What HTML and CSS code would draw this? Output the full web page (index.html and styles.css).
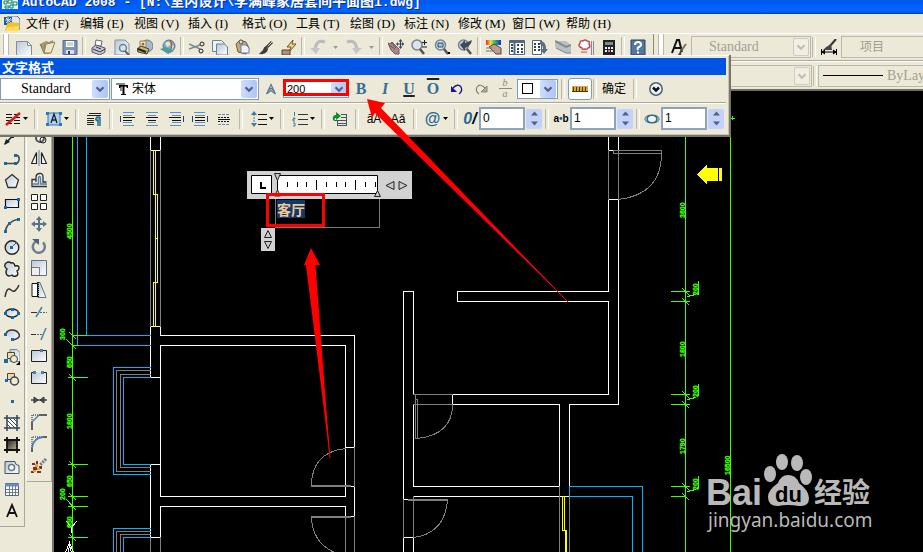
FILE: index.html
```html
<!DOCTYPE html>
<html lang="zh-CN">
<head>
<meta charset="utf-8">
<title>AutoCAD 2008</title>
<link rel="stylesheet" href="styles.css">
</head>
<body>
<svg class="sprite" aria-hidden="true">
  <defs>
    <linearGradient id="paper" x1="0" y1="0" x2="1" y2="1"><stop offset="0" stop-color="#b9c7d6"/><stop offset="1" stop-color="#fff"/></linearGradient>
    <linearGradient id="dusk" x1="0" y1="0" x2="1" y2="1"><stop offset="0" stop-color="#222"/><stop offset="1" stop-color="#b9b28c"/></linearGradient>
    <linearGradient id="tips" x1="0" y1="0" x2="1" y2="0"><stop offset="0" stop-color="#e22"/><stop offset=".3" stop-color="#ed3"/><stop offset=".6" stop-color="#2b6"/><stop offset="1" stop-color="#22d"/></linearGradient>
  </defs>
  <symbol id="app" viewBox="0 0 16 16"><path d="M4 0h9l3 3v10H4z" fill="#dfe8f2" stroke="#667"/><path d="M0 1h8v8H0z" fill="#1d5a8c"/><path d="M4 1v7M1 4h7M2 2l5 5M7 2L2 7" stroke="#cfe6f7"/><path d="M1 15L3 8l4-2 8 1v8z" fill="#f2c224"/><path d="M1 15l3-4 11-1v5z" fill="#ffdb57"/></symbol>
  <symbol id="new" viewBox="0 0 16 16"><path d="M.5 2.500h11l4 4v11H.5z" fill="url(#paper)" stroke="#7d8fa3"/><path d="M11.500 2.500v4h4z" fill="#fff" stroke="#7d8fa3"/></symbol>
  <symbol id="open" viewBox="0 0 16 16"><path d="M1 5l6-3 3 1 4-2v6l-4 8H5z" fill="#a3976b"/><path d="M5 14L7 5l9-2-4 11z" fill="#eee6c4" stroke="#8a7f57"/><path d="M1 5l4 9" stroke="#8a7f57"/></symbol>
  <symbol id="save" viewBox="0 0 16 16"><path d="M1 1.500h14v14H1z" fill="#7f93b2" stroke="#546a8c"/><path d="M4 2h8v6H4z" fill="#fff"/><path d="M5 4h6M5 6h6" stroke="#9aa9bd"/><path d="M4 11h8v4H4z" fill="#d8dfe9"/><path d="M6 12h2v3H6z" fill="#345"/></symbol>
  <symbol id="print" viewBox="0 0 16 16"><path d="M4 7l1-6 6 1-1 5z" fill="#fff" stroke="#667"/><path d="M1 9l4-3 9 3v4l-5 3-8-3z" fill="#c4c9d2" stroke="#556"/><path d="M2 10l7 3 5-3M5 8l5 2" stroke="#334" fill="none"/></symbol>
  <symbol id="preview" viewBox="0 0 16 16"><path d="M1 1h10l4 4v11H1z" fill="url(#paper)" stroke="#7c93a8"/><circle cx="9" cy="9" r="3.500" fill="#d6e2ec" stroke="#6d7f92" stroke-width="1.500"/><path d="M11 12l4 4" stroke="#6d5f4b" stroke-width="2"/></symbol>
  <symbol id="publish" viewBox="0 0 16 16"><circle cx="10" cy="7" r="6" fill="#aeb9c8" stroke="#66758a"/><path d="M3 2h6v6H3z" fill="#f7efbd" stroke="#886"/><circle cx="6" cy="5" r="1.500" fill="#a62"/><path d="M0 10l4-3 8 3-2 5-9-2z" fill="#c8b36a" stroke="#443"/><path d="M1 10l8 3" stroke="#222" stroke-width="2"/></symbol>
  <symbol id="globe" viewBox="0 0 16 16"><circle cx="9" cy="7" r="6" fill="#7fa9c8" stroke="#54748e"/><path d="M5 4q4-3 5 0t-3 4zM11 5l3 2-2 4z" fill="#e8e6bd"/><path d="M10 1q4 6-1 12" stroke="#b5472e" fill="none"/><path d="M0 10l6-2 8 4-6 3z" fill="#4c9da0"/></symbol>
  <symbol id="cut" viewBox="0 0 16 16"><path d="M0 5l11 5M0 10l11-4" stroke="#7b8794" stroke-width="1.500"/><circle cx="13" cy="5" r="2" fill="none" stroke="#222"/><circle cx="12" cy="12" r="2" fill="none" stroke="#222"/></symbol>
  <symbol id="copy" viewBox="0 0 16 16"><path d="M.5 1.500h9l3 3v8H.5z" fill="#edf2f7" stroke="#6c8096"/><path d="M4.500 5h8l3 3v8h-11z" fill="url(#paper)" stroke="#6c8096"/></symbol>
  <symbol id="paste" viewBox="0 0 16 16"><path d="M1 5l4-4 6 2 3 6-3 6-8-2z" fill="#c1aa75" stroke="#6c6044"/><path d="M6 6h5l3 3v5H6z" fill="#eef3f8" stroke="#6c8096"/><circle cx="6" cy="3" r="2" fill="#ddd" stroke="#555"/></symbol>
  <symbol id="brush" viewBox="0 0 16 16"><path d="M14 3L9 8" stroke="#444" stroke-width="3"/><path d="M14 3l-4 4" stroke="#e6cc93"/><path d="M9 7q-3 0-4 4l-4 4q8 1 9-5z" fill="#443b39"/></symbol>
  <symbol id="block" viewBox="0 0 16 16"><path d="M12 1L6 8h4l-2 5 7-8h-4z" fill="#f4d47c" stroke="#665630"/><path d="M1 11h8v5H1z" fill="#b58a78" stroke="#543"/></symbol>
  <symbol id="undo-grey" viewBox="0 0 16 16"><path d="M15 3Q6 0 5 11" fill="none" stroke="#b8bcc0" stroke-width="3"/><path d="M0 9h10l-4 6z" fill="#c4c7c9"/></symbol>
  <symbol id="redo-grey" viewBox="0 0 16 16"><path d="M1 3q9-3 10 8" fill="none" stroke="#b8bcc0" stroke-width="3"/><path d="M6 9h10l-6 6z" fill="#c4c7c9"/></symbol>
  <symbol id="pan" viewBox="0 0 16 16"><path d="M0 4l3 1 1-2 4 4 3 3v5H7L3 11z" fill="#ab8585" stroke="#725b60"/><path d="M3 3l5 6M1 6l6 4" stroke="#63575b"/><path d="M12.500 1v8M9 5h7" stroke="#345"/><path d="M12.500 0l2 2.500h-4zM12.500 10l2-2.500h-4zM8 5l2-2v4zM16 5l-2-2v4z" fill="#345"/></symbol>
  <symbol id="zoom" viewBox="0 0 16 16"><circle cx="6" cy="6" r="5" fill="#dbe4eb" stroke="#77838d" stroke-width="1.500"/><path d="M9 10l4 5" stroke="#555" stroke-width="2.500"/><path d="M13.500 1v5M11 3.500h5M11 8h5" stroke="#123" stroke-width="1"/></symbol>
  <symbol id="zoomwin" viewBox="0 0 16 16"><circle cx="6.500" cy="6" r="5" fill="#dbe4eb" stroke="#77838d" stroke-width="1.500"/><path d="M4 4h5v4H4z" fill="#9cc" stroke="#347"/><path d="M10 10l4 5" stroke="#555" stroke-width="2.500"/><path d="M14 13h2v2h-2z"/></symbol>
  <symbol id="zoomprev" viewBox="0 0 16 16"><circle cx="6.500" cy="6" r="5" fill="#c8d2da" stroke="#77838d" stroke-width="1.500"/><path d="M10 10l4 5" stroke="#555" stroke-width="2.500"/><path d="M3 6l5-5v3q5-2 7-3-1 6-7 8v3z" fill="#3d4b5c"/></symbol>
  <symbol id="props" viewBox="0 0 16 16"><path d="M0 1h15v5H0z" fill="url(#tips)"/><path d="M3 8l5-3 7 4v6h-5z" fill="#c29a88" stroke="#54484a"/><path d="M0 9h6M0 12h8" stroke="#777"/></symbol>
  <symbol id="dcenter" viewBox="0 0 16 16"><path d="M.5 1.500h15v14H.5z" fill="#fff" stroke="#526780"/><path d="M1 3h14M5.500 2v14" stroke="#526780" stroke-width="2"/><path d="M2 6h2M2 9h2M2 12h2M8 6h2M12 6h2M8 10h2M12 10h2M8 13h2M12 13h2" stroke="#345" stroke-width="2"/></symbol>
  <symbol id="palette" viewBox="0 0 16 16"><path d="M.5 1.500h9v14h-9z" fill="#fff" stroke="#526780"/><path d="M2 5h2M2 8h2M2 11h2M6 5h2M6 8h2M6 11h2" stroke="#345" stroke-width="2"/><path d="M8 2q6 0 6 8h2l-4 5-4-5h3q0-4-3-5z" fill="#5b6e84"/></symbol>
  <symbol id="sheet" viewBox="0 0 16 16"><path d="M0 2h11l5 4v8h-5L0 8z" fill="#b9c0c1"/><path d="M0 2l11 6 5-2" stroke="#818e91" stroke-width="2" fill="none"/><path d="M1 9l10 5h5" stroke="#75868b" fill="none"/></symbol>
  <symbol id="markup" viewBox="0 0 16 16"><path d="M2 4q0-3 3-2 2-2 4 0 3 0 2 3 2 3-1 4-1 2-3 1-3 1-3-1-3-1-3-3z" fill="#fff" stroke="#b84d59" stroke-width="1.500"/><path d="M3 13h6" stroke="#b84d59"/><path d="M13.500 2v14M15.500 2v14" stroke="#889"/></symbol>
  <symbol id="calc" viewBox="0 0 16 16"><path d="M2 1h12v15H2z" fill="#202325"/><path d="M4 3h8v3H4z" fill="#7b8b82"/><path d="M4 9h2M7 9h2M10 9h2M4 12h2M7 12h2M10 12h2" stroke="#eee" stroke-width="2"/><path d="M7 12h2" stroke="#e77" stroke-width="2"/></symbol>
  <symbol id="help" viewBox="0 0 16 16"><path d="M1 1h14v15H1z" fill="#54779d" stroke="#244366"/><path d="M5 6q0-3 3-3t3 3q0 1-2 2t-1 3M8 12.500v2" fill="none" stroke="#fff" stroke-width="2"/></symbol>
  <symbol id="textstyle" viewBox="0 0 16 16"><path d="M1 14L6 1h2l3 12M3 9h6" stroke="#111" stroke-width="2" fill="none"/><path d="M15 5l-5 7" stroke="#876d52" stroke-width="2"/><path d="M11 9l-4 7h3z" fill="#444"/></symbol>
  <symbol id="dimstyle" viewBox="0 0 16 16"><path d="M15 0L9 7" stroke="#333" stroke-width="2"/><path d="M10 5q-4 2-8 6h9z" fill="#444"/><path d="M.500 10v6M15.500 10v6M1 13h14" stroke="#000"/><path d="M0 13l4-2.500v5zM16 13l-4-2.500v5z"/></symbol>

  <symbol id="xline" viewBox="0 0 16 16"><path d="M1 15L15 0" stroke="#222" stroke-width="1.500"/><path d="M0 16l2-6 4 3zM7 6h3v3H7z" fill="#123"/></symbol>
  <symbol id="pline" viewBox="0 0 16 16"><path d="M2 12.500h9M11 4h1q4 1 3 5t-4 4" fill="none" stroke="#444" stroke-width="1.500"/><path d="M0 11h3v3H0zM10 11h3v3h-3zM10 3h3v3h-3z" fill="#19699e"/></symbol>
  <symbol id="polygon" viewBox="0 0 16 16"><path d="M8 1.500L14.500 7l-2.500 7.500H4L1.500 7z" fill="url(#paper)" stroke="#333" stroke-width="1.300"/></symbol>
  <symbol id="rect" viewBox="0 0 16 16"><path d="M1.500 4.500h13v8h-13z" fill="url(#paper)" stroke="#111" stroke-width="1.200"/><path d="M0 11h3v3H0zM13 3h3v3h-3z" fill="#19699e"/></symbol>
  <symbol id="arc" viewBox="0 0 16 16"><path d="M1 15Q3 4 15 2" fill="none" stroke="#444" stroke-width="1.500"/><path d="M0 13h3v3H0zM4 5h3v3H4zM13 1h3v3h-3z" fill="#19699e"/></symbol>
  <symbol id="circle" viewBox="0 0 16 16"><circle cx="8" cy="8.500" r="6.800" fill="url(#paper)" stroke="#222" stroke-width="1.400"/><path d="M8 8l5-5" stroke="#19699e"/><path d="M6 7h3v3H6z" fill="#19699e"/></symbol>
  <symbol id="cloud" viewBox="0 0 16 16"><path d="M3 8Q-1 5 2 2q3-2 5 0 3-1 4 3 4-1 4 2 0 2-2 3 2 4-1 5-3 1-4-1-3 2-5 0-2-3 0-6z" fill="url(#paper)" stroke="#222" stroke-width="1.400"/></symbol>
  <symbol id="spline" viewBox="0 0 16 16"><path d="M1 14Q3 3 7 7t8-5" fill="none" stroke="#333" stroke-width="1.500"/></symbol>
  <symbol id="ellipse" viewBox="0 0 16 16"><ellipse cx="8" cy="8" rx="6.500" ry="4" fill="url(#paper)" stroke="#222" stroke-width="1.300"/><path d="M0 7h3v3H0zM7 3h3v3H7zM13 7h3v3h-3zM7 11h3v3H7z" fill="#19699e"/></symbol>
  <symbol id="earc" viewBox="0 0 16 16"><path d="M2 7q1-4 6-4t7 4-6 6" fill="url(#paper)" stroke="#333" stroke-width="1.500"/><path d="M0 6h3v3H0zM7 11h3v3H7z" fill="#19699e"/></symbol>
  <symbol id="insert" viewBox="0 0 16 16"><path d="M6 .5h7l3 3v9H6z" fill="url(#paper)" stroke="#789"/><path d="M3.500 3.500h7v6h-7z" fill="#e5ddb0" stroke="#543"/><circle cx="10" cy="10" r="3.500" fill="#eeecc9" stroke="#345"/><path d="M0 10h4v4H0z" fill="#19699e"/><path d="M16 12v4h-4z"/></symbol>
  <symbol id="makeblock" viewBox="0 0 16 16"><path d="M3.500 2.500h7v6h-7z" fill="#e5ddb0" stroke="#543"/><circle cx="10.500" cy="10" r="4" fill="#eeecc9" stroke="#345" stroke-width="1.500"/><path d="M1 8h3v3H1z" fill="#19699e"/></symbol>
  <symbol id="point" viewBox="0 0 16 16"><path d="M7 7h3v3H7z" fill="#19699e"/></symbol>
  <symbol id="hatch" viewBox="0 0 16 16"><path d="M3 3h10v10H3z" fill="#fff"/><path d="M3 5l8 8M3 9l4 4M5 3l8 8M9 3l4 4" stroke="#345"/><path d="M3 0v16M13 0v16M0 3h16M0 13h16" stroke="#345" stroke-width="1.500"/></symbol>
  <symbol id="gradient" viewBox="0 0 16 16"><path d="M3 3h10v10H3z" fill="url(#dusk)"/><path d="M3 0v16M13 0v16M0 3h16M0 13h16" stroke="#111" stroke-width="1.800"/></symbol>
  <symbol id="region" viewBox="0 0 16 16"><path d="M1 2.500h10q0 4 4 4v8H1z" fill="url(#paper)" stroke="#456"/><circle cx="7.500" cy="8.500" r="3" fill="#fff" stroke="#678" stroke-width="1.500"/></symbol>
  <symbol id="table" viewBox="0 0 16 16"><path d="M1.500 2.500h13v12h-13z" fill="#fff" stroke="#4d6794"/><path d="M1 4h14" stroke="#6b8bc0" stroke-width="3"/><path d="M2 8.500h12M2 11.500h12M5.500 5v9M8.500 5v9M11.500 5v9" stroke="#6c7b94"/></symbol>
  <symbol id="mtext" viewBox="0 0 16 16"><path d="M3 14L8 2l5 12M5 10h6" fill="none" stroke="#111" stroke-width="1.800"/></symbol>

  <symbol id="copyobj" viewBox="0 0 16 16"><circle cx="9" cy="10" r="4" fill="#eee" stroke="#555" stroke-width="2"/><circle cx="12" cy="12" r="3" fill="none" stroke="#222"/></symbol>
  <symbol id="mirror" viewBox="0 0 16 16"><path d="M5.500 2.500v11H.5zM10.500 2.500v11h5z" fill="#fff" stroke="#222" stroke-width="1.200"/><path d="M8 0v16" stroke="#5a83a5"/></symbol>
  <symbol id="offset" viewBox="0 0 16 16"><path d="M5 10V5q0-3 3.500-3.500T12 5v5h3.500M5 7.500H1v7h15" fill="none" stroke="#333" stroke-width="1.300"/><path d="M1 12h6.500V6q0-1.500 1-1.500t1 1.500v6H16" fill="none" stroke="#4d83b6" stroke-width="1.300"/></symbol>
  <symbol id="array" viewBox="0 0 16 16"><path d="M.5.5h6v6h-6zM9.500.5h6v6h-6zM.5 9.500h6v6h-6zM9.500 9.500h6v6h-6z" fill="#fff" stroke="#222"/></symbol>
  <symbol id="move" viewBox="0 0 16 16"><path d="M8 2v12M2 8h12" stroke="#5c728a" stroke-width="2"/><path d="M8 0l3 4H5zM8 16l3-4H5zM0 8l4-3v6zM16 8l-4-3v6z" fill="#5c728a"/></symbol>
  <symbol id="rotate" viewBox="0 0 16 16"><path d="M5 3.500a6 6 0 1 0 7 1" fill="none" stroke="#6f7f90" stroke-width="2.500"/><path d="M1 1h7v6z" fill="#4d6074"/></symbol>
  <symbol id="scale" viewBox="0 0 16 16"><path d="M.5.5h15v15H.5z" fill="url(#paper)" stroke="#5c728a"/><path d="M.5 7.500h8v8h-8z" fill="#eee" stroke="#111" stroke-dasharray="1 1"/></symbol>
  <symbol id="stretch" viewBox="0 0 16 16"><path d="M7 .5l2 0 6 15H7z" fill="url(#paper)" stroke="#5c728a"/><path d="M1 1.500h5.500v13H1z" fill="#fff" stroke="#111"/><path d="M7 0v16" stroke="#111" stroke-dasharray="1 1" stroke-width="2"/></symbol>
  <symbol id="trim" viewBox="0 0 16 16"><path d="M0 8.500h6" stroke="#333"/><path d="M5 13l6-10" stroke="#4a80ac" stroke-width="1.500"/><path d="M9 8.500h7" stroke="#567" stroke-dasharray="2 1"/></symbol>
  <symbol id="extend" viewBox="0 0 16 16"><path d="M0 8.500h5" stroke="#333"/><path d="M6 8.500h5" stroke="#567" stroke-dasharray="2 1"/><path d="M10 14l5-12" stroke="#4a80ac" stroke-width="1.500"/></symbol>
  <symbol id="breakpt" viewBox="0 0 16 16"><path d="M.5 2.500h15v11H.5z" fill="url(#paper)" stroke="#222"/><path d="M9 1h3v3H9z" fill="#567b9b"/></symbol>
  <symbol id="break" viewBox="0 0 16 16"><path d="M5 2.500H.5v11h15v-11H13" fill="url(#paper)" stroke="#222"/><path d="M2 1h3v3H2zM10 1h3v3h-3z" fill="#567b9b"/></symbol>
  <symbol id="join" viewBox="0 0 16 16"><path d="M0 8h16" stroke="#444" stroke-width="1.500"/><path d="M3 5l4 3-4 3zM13 5L9 8l4 3z" fill="#456" stroke="#333"/></symbol>
  <symbol id="chamfer" viewBox="0 0 16 16"><path d="M1 16V8M8 1h8" stroke="#333" stroke-width="1.500"/><path d="M1 8V1h7" stroke="#111" fill="none" stroke-dasharray="1 1"/><path d="M1 8l7-7" stroke="#4a80ac" stroke-width="1.500"/></symbol>
  <symbol id="fillet" viewBox="0 0 16 16"><path d="M1 16v-4M12 1h4" stroke="#333" stroke-width="1.500"/><path d="M1 12V1h11" stroke="#111" fill="none" stroke-dasharray="1 1"/><path d="M1 12Q2 2 12 1" fill="none" stroke="#4a80ac" stroke-width="1.800"/></symbol>
  <symbol id="explode" viewBox="0 0 16 16"><path d="M15 1L9 7" stroke="#777" stroke-width="3" stroke-dasharray="2 1"/><path d="M1 5h3v2H1zM5 3h2v3H5zM8 8h3v3H8zM2 9h4v3H2zM0 13h3v2H0zM6 13h4v2H6z" fill="#8d2a20"/><path d="M4 6h3v3H4zM6 10h3v2H6zM2 12h3v2H2z" fill="#dba23e"/></symbol>

  <symbol id="tt" viewBox="0 0 16 16"><path d="M1 2h9v2H7v6H5V4H1z" fill="#888"/><path d="M4 5V4h9v3h-1l-1-1.500H9.500V13H11v1H6v-1h1.500V5.500H6L5 7H4z"/></symbol>
  <symbol id="annot" viewBox="0 0 16 16"><path d="M8 3.500L3.500 13 8 9.500l4.500 3.500zM5 10l3-3 3 3" fill="#e9f0f2" stroke="#587a93" stroke-width="1.200"/></symbol>
  <symbol id="undo" viewBox="0 0 16 16"><path d="M4 7q5-5 8-1 2 4-2 7" fill="none" stroke="#15188b" stroke-width="1.300"/><path d="M2 5v6h6z" fill="#15188b"/></symbol>
  <symbol id="redo" viewBox="0 0 16 16"><path d="M12 7Q7 2 4 6q-2 4 2 7" fill="none" stroke="#85857a" stroke-width="1.200"/><path d="M14 5v6H8z" fill="#aaa99b" stroke="#85857a"/></symbol>
  <symbol id="ruler" viewBox="0 0 16 16"><path d="M0 5h16v6H0z" fill="#d9ab36"/><path d="M0 10.500h16M1.500 6v4M4.500 6v4M7.500 6v4M10.500 6v4M13.500 6v4" stroke="#443409"/></symbol>
  <symbol id="options" viewBox="0 0 16 16"><circle cx="8" cy="8" r="6.200" fill="#edf1f4" stroke="#49627e" stroke-width="1.500"/><path d="M5 6.500l3 3 3-3" fill="none" stroke="#111" stroke-width="2.500"/></symbol>
  <symbol id="columns" viewBox="0 0 16 16"><path d="M1 3.500h6M9 3.500h6M1 6.500h6M9 6.500h6M1 9.500h6M9 9.500h6M1 12.500h6M9 12.500h6" stroke="#111"/><path d="M1 14L15 2" stroke="#d31921" stroke-width="2.500"/></symbol>
  <symbol id="justify" viewBox="0 0 16 16"><path d="M2 2h12v12H2z" fill="#b6cfe8" stroke="#297ab7"/><path d="M5 12L8 3l3 9M6 9h4" fill="none" stroke="#123" stroke-width="1.300"/><path d="M0 1h3v3H0zM13 1h3v3h-3zM0 12h3v3H0zM13 12h3v3h-3z" fill="#297ab7"/></symbol>
  <symbol id="para" viewBox="0 0 16 16"><path d="M3 2.500h12M1 4.500h14M1 7.500h7M1 9.500h7M1 11.500h7M1 13.500h7" stroke="#222"/><path d="M14 6h-3q-3 3 1 4v5M14 6v9" stroke="#2c6c96" stroke-width="1.500" fill="#62a0c2"/></symbol>
  <symbol id="al" viewBox="0 0 16 16"><path d="M3 1.500h11M3 4.500h9M3 11.500h9M3 14.500h11" stroke="#5e91bd"/><path d="M3 6.500h12M3 9.500h9" stroke="#111"/><path d="M.5 5v6" stroke="#246"/></symbol>
  <symbol id="ac" viewBox="0 0 16 16"><path d="M2 1.500h12M4 4.500h8M4 11.500h8M2 14.500h12" stroke="#5e91bd"/><path d="M2 6.500h12M4 9.500h8" stroke="#111"/></symbol>
  <symbol id="ar" viewBox="0 0 16 16"><path d="M2 1.500h11M4 4.500h9M4 11.500h9M2 14.500h11" stroke="#5e91bd"/><path d="M1 6.500h12M4 9.500h9" stroke="#111"/><path d="M15.500 5v6" stroke="#246"/></symbol>
  <symbol id="aj" viewBox="0 0 16 16"><path d="M2 1.500h11M3 4.500h10M3 11.500h10M2 14.500h11" stroke="#5e91bd"/><path d="M3 6.500h10M3 9.500h10" stroke="#111"/><path d="M.500 5v6M15.500 5v6" stroke="#246"/></symbol>
  <symbol id="ad" viewBox="0 0 16 16"><path d="M2 3.500h12M2 13.500h12" stroke="#5e91bd" stroke-dasharray="3 1"/><path d="M2 6.500h12M2 10.500h12" stroke="#111" stroke-dasharray="2 1"/><path d="M2 8.500h12" stroke="#111"/></symbol>
  <symbol id="spacing" viewBox="0 0 16 16"><path d="M7 3.500h9M7 8.500h9M7 13.500h9" stroke="#111"/><path d="M3 3v10" stroke="#397ba1" stroke-dasharray="2 1"/><path d="M3 0l3 4H0zM3 16l3-4H0z" fill="#397ba1"/></symbol>
  <symbol id="list" viewBox="0 0 16 16"><path d="M6 3.500h10M6 8.500h10M6 13.500h10" stroke="#333"/><path d="M2.500 1v4M1 7h2v1H1v2h2M1 12h2v3H1" stroke="#397ba1" fill="none"/></symbol>
  <symbol id="field" viewBox="0 0 16 16"><path d="M9 3.500h6M9 6.500h6M2 9.500h13M6 12.500h9M6 14.500h9M14.500 3v12M5.500 9v6" stroke="#456"/><path d="M1 9Q0 4 4 4V1l5 4-5 4V7Q2 7 3 10z" fill="#158a2f"/></symbol>
  <symbol id="width" viewBox="0 0 16 16"><ellipse cx="8" cy="8" rx="7.500" ry="4.500" fill="#356d88"/><ellipse cx="8" cy="8" rx="4" ry="3" fill="#f2f4f0"/><path d="M0 8l3-3v6zM16 8l-3-3v6z" fill="#79a9bb"/></symbol>
  <symbol id="down" viewBox="0 0 16 16"><path d="M4 6l4 4 4-4" fill="none" stroke="currentColor" stroke-width="2.500"/></symbol>
  <symbol id="tri" viewBox="0 0 7 7"><path d="M1 2h5L3.500 5z" fill="currentColor"/></symbol>
  <symbol id="up-tri" viewBox="0 0 7 7"><path d="M0 5.500h7L3.500 1.500z" fill="currentColor"/></symbol>
  <symbol id="down-tri" viewBox="0 0 7 7"><path d="M0 1.500h7L3.500 5.500z" fill="currentColor"/></symbol>
</svg>

<div class="app">
  <header class="titlebar">
    <svg class="title-icon" viewBox="0 0 16 12" aria-hidden="true"><path d="M0 0h16v11H0z" fill="#e4fff4"/><path d="M2 3h3v3H2zM6 2h4v3H6zM11 4h4v3h-4zM3 8h4v2H3zM8 7h3v3H8z" fill="none" stroke="#197864"/></svg>
    <h1>AutoCAD 2008 - [N:\<span>室内设计</span>\<span>李满峰家居套间平面图</span>1.dwg]</h1>
  </header>

  <nav class="menubar" aria-label="菜单">
    <svg class="icon"><use href="#app"/></svg>
    <div class="menus">
      <button>文件<span>(F)</span></button><button>编辑<span>(E)</span></button><button>视图<span>(V)</span></button><button>插入<span>(I)</span></button><button>格式<span>(O)</span></button><button>工具<span>(T)</span></button><button>绘图<span>(D)</span></button><button>标注<span>(N)</span></button><button>修改<span>(M)</span></button><button>窗口<span>(W)</span></button><button>帮助<span>(H)</span></button>
    </div>
  </nav>

  <div class="toolrow">
    <div class="toolbar standard">
      <i class="grip"></i>
      <button class="tool" aria-label="新建"><svg class="icon"><use href="#new"/></svg></button>
      <button class="tool" aria-label="打开"><svg class="icon"><use href="#open"/></svg></button>
      <button class="tool" aria-label="保存"><svg class="icon"><use href="#save"/></svg></button>
      <i class="sep"></i>
      <button class="tool" aria-label="打印"><svg class="icon"><use href="#print"/></svg></button>
      <button class="tool" aria-label="打印预览"><svg class="icon"><use href="#preview"/></svg></button>
      <button class="tool" aria-label="发布"><svg class="icon"><use href="#publish"/></svg></button>
      <button class="tool" aria-label="三维"><svg class="icon"><use href="#globe"/></svg></button>
      <i class="sep"></i>
      <button class="tool" aria-label="剪切"><svg class="icon"><use href="#cut"/></svg></button>
      <button class="tool" aria-label="复制"><svg class="icon"><use href="#copy"/></svg></button>
      <button class="tool" aria-label="粘贴"><svg class="icon"><use href="#paste"/></svg></button>
      <button class="tool" aria-label="特性匹配"><svg class="icon"><use href="#brush"/></svg></button>
      <button class="tool" aria-label="块编辑器"><svg class="icon"><use href="#block"/></svg></button>
      <i class="sep"></i>
      <button class="tool" aria-label="放弃"><svg class="icon"><use href="#undo-grey"/></svg></button>
      <button class="drop" aria-label="放弃列表"><svg class="tri"><use href="#tri"/></svg></button>
      <button class="tool" aria-label="重做"><svg class="icon"><use href="#redo-grey"/></svg></button>
      <button class="drop" aria-label="重做列表"><svg class="tri"><use href="#tri"/></svg></button>
      <i class="sep"></i>
      <button class="tool" aria-label="平移"><svg class="icon"><use href="#pan"/></svg></button>
      <button class="tool" aria-label="缩放"><svg class="icon"><use href="#zoom"/></svg></button>
      <button class="tool" aria-label="窗口缩放"><svg class="icon"><use href="#zoomwin"/></svg></button>
      <button class="tool" aria-label="缩放上一个"><svg class="icon"><use href="#zoomprev"/></svg></button>
      <i class="sep"></i>
      <button class="tool" aria-label="特性"><svg class="icon"><use href="#props"/></svg></button>
      <button class="tool" aria-label="设计中心"><svg class="icon"><use href="#dcenter"/></svg></button>
      <button class="tool" aria-label="工具选项板"><svg class="icon"><use href="#palette"/></svg></button>
      <button class="tool" aria-label="图纸集"><svg class="icon"><use href="#sheet"/></svg></button>
      <button class="tool" aria-label="标记集"><svg class="icon"><use href="#markup"/></svg></button>
      <button class="tool" aria-label="计算器"><svg class="icon"><use href="#calc"/></svg></button>
      <i class="sep"></i>
      <button class="tool" aria-label="帮助"><svg class="icon"><use href="#help"/></svg></button>
    </div>
    <div class="toolbar styles">
      <i class="grip"></i>
      <button class="tool" aria-label="文字样式"><svg class="icon"><use href="#textstyle"/></svg></button>
      <div class="combo off style-combo"><select aria-label="文字样式名" disabled><option>Standard</option></select><span class="arrow"><svg class="icon"><use href="#down"/></svg></span></div>
      <i class="sep"></i>
      <button class="tool" aria-label="标注样式"><svg class="icon"><use href="#dimstyle"/></svg></button>
      <div class="combo off grow dim-combo"><select aria-label="标注样式名" disabled><option>项目</option></select></div>
    </div>
  </div>

  <div class="toolrow second">
    <div class="combo off color-combo"><select aria-label="颜色" disabled><option></option></select><span class="arrow"><svg class="icon"><use href="#down"/></svg></span></div>
    <i class="sep"></i>
    <div class="combo off grow line-combo"><i class="linetype"></i><select aria-label="线型" disabled><option>ByLayer</option></select></div>
  </div>

  <main class="workspace">
    <div class="rails">
      <div class="rail draw">
        <button aria-label="构造线"><svg class="icon"><use href="#xline"/></svg></button>
        <button aria-label="多段线"><svg class="icon"><use href="#pline"/></svg></button>
        <button aria-label="正多边形"><svg class="icon"><use href="#polygon"/></svg></button>
        <button aria-label="矩形"><svg class="icon"><use href="#rect"/></svg></button>
        <button aria-label="圆弧"><svg class="icon"><use href="#arc"/></svg></button>
        <button aria-label="圆"><svg class="icon"><use href="#circle"/></svg></button>
        <button aria-label="修订云线"><svg class="icon"><use href="#cloud"/></svg></button>
        <button aria-label="样条曲线"><svg class="icon"><use href="#spline"/></svg></button>
        <button aria-label="椭圆"><svg class="icon"><use href="#ellipse"/></svg></button>
        <button aria-label="椭圆弧"><svg class="icon"><use href="#earc"/></svg></button>
        <button aria-label="插入块"><svg class="icon"><use href="#insert"/></svg></button>
        <button aria-label="创建块"><svg class="icon"><use href="#makeblock"/></svg></button>
        <button aria-label="点"><svg class="icon"><use href="#point"/></svg></button>
        <button aria-label="图案填充"><svg class="icon"><use href="#hatch"/></svg></button>
        <button aria-label="渐变色"><svg class="icon"><use href="#gradient"/></svg></button>
        <button aria-label="面域"><svg class="icon"><use href="#region"/></svg></button>
        <button aria-label="表格"><svg class="icon"><use href="#table"/></svg></button>
        <button aria-label="多行文字"><svg class="icon"><use href="#mtext"/></svg></button>
      </div>
      <div class="rail modify">
        <button aria-label="复制对象"><svg class="icon"><use href="#copyobj"/></svg></button>
        <button aria-label="镜像"><svg class="icon"><use href="#mirror"/></svg></button>
        <button aria-label="偏移"><svg class="icon"><use href="#offset"/></svg></button>
        <button aria-label="阵列"><svg class="icon"><use href="#array"/></svg></button>
        <button aria-label="移动"><svg class="icon"><use href="#move"/></svg></button>
        <button aria-label="旋转"><svg class="icon"><use href="#rotate"/></svg></button>
        <button aria-label="缩放对象"><svg class="icon"><use href="#scale"/></svg></button>
        <button aria-label="拉伸"><svg class="icon"><use href="#stretch"/></svg></button>
        <button aria-label="修剪"><svg class="icon"><use href="#trim"/></svg></button>
        <button aria-label="延伸"><svg class="icon"><use href="#extend"/></svg></button>
        <button aria-label="打断于点"><svg class="icon"><use href="#breakpt"/></svg></button>
        <button aria-label="打断"><svg class="icon"><use href="#break"/></svg></button>
        <button aria-label="合并"><svg class="icon"><use href="#join"/></svg></button>
        <button aria-label="倒角"><svg class="icon"><use href="#chamfer"/></svg></button>
        <button aria-label="圆角"><svg class="icon"><use href="#fillet"/></svg></button>
        <button aria-label="分解"><svg class="icon"><use href="#explode"/></svg></button>
      </div>
    </div>

    <div class="canvas">
      <svg class="plan" viewBox="54 91 869 461" preserveAspectRatio="xMinYMin meet" role="img" aria-label="平面图">
        <g transform="translate(.5 .5)" fill="none" stroke-linecap="square">
          <g stroke="#fff">
            <path d="M150 91V150H160V91M150 367V326H160V335H354V447H345M150 367V377H160M345 345H160V496H345zM150 536V464H160M345 516V506H160V537H150"/>
            <path d="M351 486H354V516H351M403 499V291H413V394M408 499H403M403 552V537H413V552M452 404V394H608V301H457V291H608V199H618V404H569V496H413M452 404H559V486H413V404M608 91V150H612M618 91V150M608 199H618"/>
          </g>
          <g stroke="#808080">
            <path d="M150 150V326M160 150V326M608 150V199M618 150V199M354 447V486M345 516V552M354 516V552M150 537V552M160 537V552M403 499V537M413 496V537M559 486V552M569 496V552"/>
            <path d="M413 394H452M413 404H452M415 394V438H417V399H415M417 438Q452 434 452 404M613 150H661V153H613zM661 153Q661 194 618 199M345 448Q311 452 311 485M311 485H350M311 486H350M311 516H350M311 517H350M311 517Q312 542 334 552M408 499H447M408 500H447M447 500Q444 533 413 537"/>
            <path d="M150 370H116V471H150M150 374H120V467H150M116 552V531H150M120 552V534H150"/>
          </g>
          <g stroke="#00b2ff">
            <path d="M77 91V345H150M86 91V335H150M150 367H113V474H150M150 377H123V464H150M113 552V528H150M123 552V537H150M569 496V486H642V552M569 496H632V552"/>
          </g>
          <path stroke="#ff0" d="M153 150H155V194H157V282H155V326H153V282H155V194H153zM155 238H157M562 496H564V530H566V552M562 496V530H565V552"/>
          <g stroke="#40ff00">
            <path d="M72 91V552M685 91V552M730 118V552M72 335H86M72 345H78M68 377H87M68 464H87M68 496H87M68 506H87M68 537H87M671 291H689M671 301H689M671 394H689M671 404H689M671 486H689M671 496H685"/>
            <path d="M69 332l6 6M69 342l6 6M69 374l6 6M69 461l6 6M69 493l6 6M69 503l6 6M69 534l6 6M682 288l6 6M682 298l6 6M682 391l6 6M682 401l6 6M682 483l6 6M682 493l6 6M66 339l6 6M66 499l6 6M687 296l8-2M687 399l8-2M687 491l8-2M731 118h3M732 116v3"/>
            <path d="M698 281V294M698 384V395M698 476V488"/>
          </g>
          <path stroke="#fff" d="M66 521l5 6l5-6M71 527V532M65 552l4-10l4 10M68 552l1-8l2 8"/>
        </g>
        <g class="dims">
          <text transform="translate(72 239) rotate(-90)">4500</text>
          <text transform="translate(65 340) rotate(-90)">300</text>
          <text transform="translate(72 368) rotate(-90)">650</text>
          <text transform="translate(72 429) rotate(-90)">1800</text>
          <text transform="translate(72 487) rotate(-90)">650</text>
          <text transform="translate(65 500) rotate(-90)">200</text>
          <text transform="translate(72 528) rotate(-90)">650</text>
          <text transform="translate(685 218) rotate(-90)">3600</text>
          <text transform="translate(698 295) rotate(-90)">200</text>
          <text transform="translate(685 357) rotate(-90)">1800</text>
          <text transform="translate(698 397) rotate(-90)">200</text>
          <text transform="translate(685 454) rotate(-90)">1790</text>
          <text transform="translate(698 490) rotate(-90)">200</text>
          <text transform="translate(730 475) rotate(-90)">16500</text>
        </g>
        <path fill="#ff0" d="M697 174.500l10-10V168h11v13h-11v3.500zM719 168h3v13h-3z"/>
      </svg>

      <div class="editor">
        <svg class="editor-ruler" viewBox="0 0 165 28" aria-hidden="true">
          <path d="M0 0h165v28H0z" fill="#d2d2d2"/>
          <path d="M4.500 4.500h20v18h-20zM30.500 4.500h100v18h-100z" fill="#fff" stroke="#000"/>
          <path d="M14 11v6h5" fill="none" stroke="#000" stroke-width="2"/>
          <path d="M40.500 11v5M50.500 11v5M59.500 11v5M69.500 9v10M79.500 11v5M89.500 11v5M98.500 11v5M108.500 9v10M118.500 11v5M128.500 11v5" stroke="#000"/>
          <path d="M27.500 2.500h6l-3 7zM27.500 25l3-6 3 6zM127.500 25.500h6l-3-6zM147 10.500v8l-8-4zM152 10.500v8l8-4z" fill="#c8c8c8" stroke="#222"/>
        </svg>
        <div class="textframe"><input type="text" value="客厅" aria-label="多行文字"></div>
        <svg class="stepper" viewBox="0 0 14 23" aria-hidden="true"><path d="M0 0h14v23H0z" fill="#d2d2d2"/><path d="M3.500 9.500h7l-3.500-7zM3.500 13.500h7l-3.500 7z" fill="#c8c8c8" stroke="#222"/></svg>
      </div>

      <svg class="watermark" viewBox="0 0 172 84" role="img" aria-label="Baidu 经验">
        <g fill="#b9b9b9">
          <ellipse cx="68" cy="20" rx="6" ry="8"/><ellipse cx="80" cy="8" rx="6" ry="8"/><ellipse cx="95" cy="9" rx="6" ry="8"/><ellipse cx="104" cy="23" rx="6" ry="8"/>
          <path d="M86 21q8 0 11 8 10 8 10 15 0 9-10 8-11-2-21 0-10 0-10-9 0-7 10-14 3-8 10-8z"/>
          <text class="wm-latin" x="4" y="51">Bai</text>
          <text class="wm-cjk" x="112" y="49">经验</text>
          <text class="wm-url" x="6" y="73">jingyan.baidu.com</text>
        </g>
        <text class="wm-du" x="73" y="48">du</text>
      </svg>
    </div>
  </main>

  <section class="dialog" aria-labelledby="fmt">
    <h2 id="fmt">文字格式</h2>
    <div class="fmtrow">
      <div class="combo w-style"><select aria-label="样式"><option>Standard</option></select><span class="arrow"><svg class="icon"><use href="#down"/></svg></span></div>
      <div class="combo w-font"><svg class="icon"><use href="#tt"/></svg><select aria-label="字体"><option>宋体</option></select><span class="arrow"><svg class="icon"><use href="#down"/></svg></span></div>
      <button class="fmt" aria-label="注释性"><svg class="icon"><use href="#annot"/></svg></button>
      <div class="combo w-size"><select aria-label="文字高度"><option>200</option></select><span class="arrow"><svg class="icon"><use href="#down"/></svg></span></div>
      <button class="fmt letter bold">B</button>
      <button class="fmt letter italic">I</button>
      <button class="fmt letter under">U</button>
      <button class="fmt letter over">O</button>
      <button class="fmt" aria-label="放弃"><svg class="icon"><use href="#undo"/></svg></button>
      <button class="fmt" aria-label="重做"><svg class="icon"><use href="#redo"/></svg></button>
      <button class="fmt fraction" aria-label="堆叠"><span>b</span><span>a</span></button>
      <div class="combo w-color"><i class="swatch"></i><select aria-label="文字颜色"><option></option></select><span class="arrow"><svg class="icon"><use href="#down"/></svg></span></div>
      <i class="sep"></i>
      <button class="fmt pressed" aria-label="标尺"><svg class="icon"><use href="#ruler"/></svg></button>
      <i class="sep narrow"></i>
      <button class="ok">确定</button>
      <i class="sep"></i>
      <button class="fmt options" aria-label="选项"><svg class="icon"><use href="#options"/></svg></button>
    </div>
    <div class="fmtrow lower">
      <button class="split" aria-label="分栏"><svg class="icon"><use href="#columns"/></svg><svg class="tri"><use href="#tri"/></svg></button>
      <i class="sep"></i>
      <button class="split" aria-label="对正"><svg class="icon"><use href="#justify"/></svg><svg class="tri"><use href="#tri"/></svg></button>
      <i class="sep"></i>
      <button class="fmt" aria-label="段落"><svg class="icon"><use href="#para"/></svg></button>
      <i class="sep"></i>
      <button class="fmt" aria-label="左对齐"><svg class="icon"><use href="#al"/></svg></button>
      <button class="fmt" aria-label="居中"><svg class="icon"><use href="#ac"/></svg></button>
      <button class="fmt" aria-label="右对齐"><svg class="icon"><use href="#ar"/></svg></button>
      <button class="fmt" aria-label="两端对齐"><svg class="icon"><use href="#aj"/></svg></button>
      <button class="fmt" aria-label="分布"><svg class="icon"><use href="#ad"/></svg></button>
      <i class="sep"></i>
      <button class="split" aria-label="行距"><svg class="icon"><use href="#spacing"/></svg><svg class="tri"><use href="#tri"/></svg></button>
      <i class="sep"></i>
      <button class="split" aria-label="编号"><svg class="icon"><use href="#list"/></svg><svg class="tri"><use href="#tri"/></svg></button>
      <i class="sep"></i>
      <button class="fmt" aria-label="插入字段"><svg class="icon"><use href="#field"/></svg></button>
      <i class="sep"></i>
      <button class="fmt case" aria-label="大写">āA</button>
      <button class="fmt case" aria-label="小写">Aǎ</button>
      <i class="sep"></i>
      <button class="split at" aria-label="符号"><b>@</b><svg class="tri"><use href="#tri"/></svg></button>
      <i class="sep"></i>
      <label class="mark oblique" for="oblique"><b>0</b>/</label>
      <div class="spin"><input id="oblique" type="text" value="0"><span><button aria-label="增大倾斜"><svg class="tri"><use href="#up-tri"/></svg></button><button aria-label="减小倾斜"><svg class="tri"><use href="#down-tri"/></svg></button></span></div>
      <i class="sep"></i>
      <label class="mark track" for="tracking">a<b>•</b>b</label>
      <div class="spin"><input id="tracking" type="text" value="1"><span><button aria-label="增大追踪"><svg class="tri"><use href="#up-tri"/></svg></button><button aria-label="减小追踪"><svg class="tri"><use href="#down-tri"/></svg></button></span></div>
      <i class="sep"></i>
      <label class="mark" for="wfactor" aria-label="宽度因子"><svg class="icon"><use href="#width"/></svg></label>
      <div class="spin"><input id="wfactor" type="text" value="1"><span><button aria-label="增大宽度"><svg class="tri"><use href="#up-tri"/></svg></button><button aria-label="减小宽度"><svg class="tri"><use href="#down-tri"/></svg></button></span></div>
    </div>
  </section>

  <svg class="notes" viewBox="0 0 923 552" preserveAspectRatio="xMinYMin meet" aria-hidden="true">
    <path d="M284.500 80.500h63v14h-63zM267.500 194.500h56v31h-56z" fill="none" stroke="#f00" stroke-width="3"/>
    <path d="M367 99l18 4-4 5 187 194L375 113l-3 5zM311 248l9 17h-4.500L330 459 306 265h-2z" fill="#f00"/>
    <path d="M500 233l68 69M322 370l8 88" stroke="#f00"/>
  </svg>
</div>
</body>
</html>
```
FILE: styles.css
```css
* { box-sizing: border-box; }

body {
  margin: 0;
  overflow: hidden;
  background: #ece9d8;
  color: #000;
  font: 12px/16px "Liberation Serif", "Noto Sans CJK SC", serif;
}

button {
  display: flex;
  flex: none;
  align-items: center;
  justify-content: center;
  margin: 0;
  padding: 0;
  border: 0;
  background: none;
  color: inherit;
  font: inherit;
}

.sprite { position: absolute; width: 0; height: 0; }
.icon { display: block; flex: none; width: 16px; height: 16px; overflow: hidden; }
.tri { display: block; flex: none; width: 7px; height: 7px; }

.app {
  position: relative;
  display: flex;
  flex-direction: column;
  height: 100vh;
}

/* Title and menu */
.titlebar {
  display: flex;
  flex: none;
  align-items: flex-end;
  gap: 4px;
  height: 14px;
  padding: 0 0 4px 2px;
  overflow: hidden;
  background: linear-gradient(#0058ee, #0066ff 80%, #003dc4);
}
.title-icon { width: 16px; height: 12px; }
.titlebar h1 {
  margin: 0;
  color: #fff;
  font: bold 13px/14px "Liberation Mono", "Noto Sans CJK SC", monospace;
  text-shadow: 1px 1px #06307f;
  white-space: nowrap;
}
.titlebar h1 span { font-size: 14px; }

.menubar {
  display: flex;
  flex: none;
  align-items: center;
  gap: 6px;
  height: 19px;
  padding-left: 4px;
}
.menus { display: flex; }
.menus button { width: 54px; justify-content: flex-start; gap: 3px; }
.menus span { font-size: 13px; }

/* Docked toolbars */
.toolrow {
  display: flex;
  flex: none;
  height: 28px;
  border-top: 1px solid #fff;
  border-bottom: 1px solid #aca899;
  overflow: hidden;
}
.toolrow.second {
  align-items: center;
  height: 30px;
  border-bottom: 2px solid #6f6d62;
}
.toolbar { display: flex; align-items: center; }
.standard { flex: none; padding-right: 4px; border-right: 1px solid #8d8a7c; }
.styles { flex: 1; min-width: 0; padding-left: 1px; }
.grip {
  flex: none;
  width: 6px;
  height: 26px;
  margin: 0 3px;
  border: solid #bdb9a7;
  border-width: 0 1px;
  background: #fff;
}
.tool { width: 23px; height: 24px; }
.styles .tool { width: 24px; }
.drop { width: 13px; height: 24px; color: #9c9b91; }
.sep { display: block; flex: none; width: 6px; height: 20px; }
.sep::before {
  content: "";
  display: block;
  width: 2px;
  height: 100%;
  margin: 0 auto;
  border-left: 1px solid #bdb9a7;
  border-right: 1px solid #fff;
}

/* Drop-downs */
.combo {
  display: flex;
  flex: none;
  align-items: center;
  height: 22px;
  border: 1px solid #7f9db9;
  background: #fff;
}
.combo select {
  appearance: none;
  flex: 1;
  min-width: 0;
  height: 100%;
  margin: 0;
  padding: 0;
  border: 0;
  background: none;
  color: #000;
  font: inherit;
  opacity: 1;
}
.arrow {
  display: flex;
  flex: none;
  align-items: center;
  justify-content: center;
  width: 16px;
  height: 18px;
  margin-right: 1px;
  border-radius: 2px;
  background: linear-gradient(90deg, #cfdcff, #aec4f5);
  color: #4d6185;
}
.arrow .icon { width: 14px; height: 14px; }
.combo.off { border-color: #bdb9a7; background: #ece9d8; }
.combo.off select { color: #a29f90; font-size: 14px; }
.combo.off .arrow { border: 1px solid #cfccbd; background: #f1efe5; color: #c0bdac; }
.grow { flex: 1; min-width: 0; border-right: 0; }
.style-combo { width: 120px; padding-left: 17px; }
.dim-combo { padding-left: 18px; }
.combo.dim-combo select { font-size: 12px; }
.color-combo { width: 812px; }
.line-combo { gap: 4px; padding-left: 4px; }
.linetype { width: 60px; height: 1px; background: #000; }

/* Workspace */
.workspace { display: flex; flex: 1; min-height: 0; }
.rails {
  display: flex;
  flex: none;
  align-items: flex-start;
  gap: 1px;
  width: 54px;
  border-right: 2px solid #77756a;
  overflow: hidden;
}
.rail {
  width: 25px;
  padding: 35px 0 4px;
  border: solid #aca899;
  border-width: 0 1px 1px 0;
}
.modify { width: 26px; border-left: 1px solid #fff; padding-top: 34px; }
.rail button { width: 100%; height: 22px; }
.canvas { position: relative; flex: 1; min-width: 0; background: #000; overflow: hidden; }
.plan { display: block; width: 100%; height: 100%; shape-rendering: crispEdges; }
.dims { fill: #40ff00; font: bold 7px "Liberation Sans", sans-serif; stroke: #40ff00; stroke-width: .3; }

.editor { position: absolute; left: 193px; top: 80px; width: 165px; }
.editor-ruler { display: block; width: 165px; height: 28px; }
.textframe {
  width: 105px;
  height: 29px;
  margin-left: 28px;
  padding: 1px;
  border: 1px solid #777;
  border-top: 0;
}
.textframe input {
  display: block;
  width: 28px;
  height: 18px;
  padding: 0;
  border: 0;
  background: #10396b;
  color: #f3c894;
  font: bold 14px/18px "Noto Sans CJK SC", sans-serif;
}
.stepper { display: block; width: 14px; height: 23px; margin-left: 14px; }

.watermark { position: absolute; right: 49px; bottom: 14px; width: 172px; height: 84px; }
.wm-latin { font: bold 36px "Liberation Sans", sans-serif; }
.wm-cjk { font: bold 28px "Noto Sans CJK SC", sans-serif; }
.wm-url { font: 19px "Noto Sans", sans-serif; }
.wm-du { font: bold 22px "Liberation Sans", sans-serif; fill: #000; }

/* Floating text format bar */
.dialog {
  position: absolute;
  left: 0;
  top: 55px;
  width: 731px;
  padding: 3px 3px 2px 0;
  border: solid #77756a;
  border-width: 0 2px 2px 0;
  background: #ece9d8;
  box-shadow: inset 0 1px #fff, inset -1px -1px #c8c5b4;
}
.dialog h2 {
  margin: 0;
  padding-left: 2px;
  background: #0054e3;
  color: #fff;
  font: bold 13px/17px "Noto Sans CJK SC", sans-serif;
}
.fmtrow { display: flex; align-items: center; height: 28px; border-bottom: 1px solid #aca899; }
.fmtrow .sep { width: 10px; }
.fmtrow .narrow { width: 6px; }
.lower { height: 30px; border-top: 1px solid #fff; border-bottom: 0; }
.fmt { width: 24px; height: 22px; }
.options { margin-left: 4px; }
.w-style { width: 110px; margin-right: 1px; padding-left: 20px; }
.w-style select { font-size: 14px; }
.w-font { width: 148px; gap: 1px; padding-left: 3px; }
.w-size { width: 66px; height: 18px; padding-left: 3px; }
.w-size select { font: 11px/14px "Liberation Sans", sans-serif; }
.w-size .arrow { height: 14px; }
.w-color { width: 41px; height: 20px; padding-left: 4px; }
.swatch { width: 11px; height: 11px; border: 1px solid #000; }
.letter { color: #376f92; font: bold 16px/16px "Liberation Serif", serif; }
.italic { font-style: italic; }
.under { text-decoration: underline 2px #222; }
.over { text-decoration: overline 2px #222; }
.fraction { flex-direction: column; color: #8b897d; font: italic 10px/10px "Liberation Serif", serif; }
.fraction span:first-child { border-bottom: 1px solid #8b897d; padding: 0 4px; }
.pressed { border: 1px solid #7f9db9; border-radius: 3px; background: #fff; }
.ok { width: 32px; height: 22px; }
.split { gap: 1px; width: 31px; height: 22px; padding-left: 2px; }
.case { font: 12px/16px "Liberation Sans", sans-serif; }
.at b { width: 16px; color: #286690; font: bold 16px/16px "Liberation Sans", sans-serif; }
.mark {
  display: flex;
  flex: none;
  align-items: center;
  justify-content: center;
  width: 18px;
  font: bold 10px/16px "Liberation Sans", sans-serif;
}
.track b { color: #286690; }
.oblique { font-size: 16px; font-style: italic; }
.oblique b { color: #286690; }
.spin { display: flex; flex: none; align-items: center; width: 63px; }
.spin input {
  flex: 1;
  min-width: 0;
  height: 23px;
  padding: 0 0 2px 2px;
  border: 2px solid #8ca3bb;
  background: #fff;
  font: 12px/16px "Liberation Sans", sans-serif;
}
.spin > span {
  display: flex;
  flex-direction: column;
  width: 16px;
  height: 20px;
  margin-left: 1px;
  border-radius: 2px;
  background: #c4d2fa;
  color: #4d6185;
}
.spin button { flex: 1; }

.notes { position: absolute; inset: 0; width: 100%; height: 100%; pointer-events: none; }
```
